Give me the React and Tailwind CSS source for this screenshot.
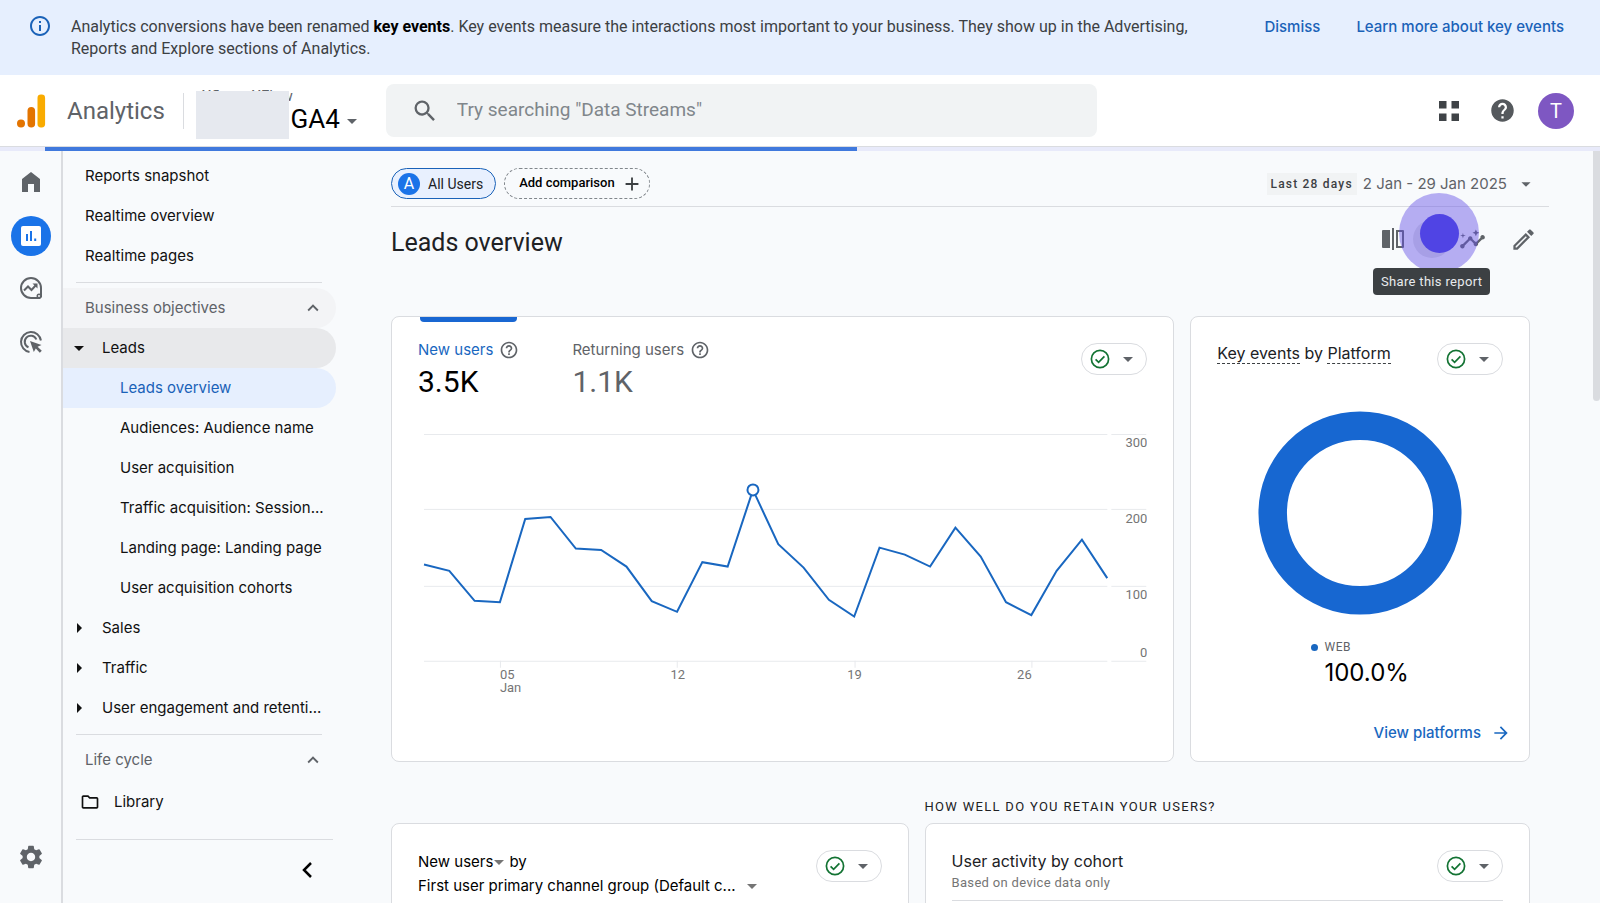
import { useState } from "react";
import {
  MdAdd,
  MdArrowDropDown,
  MdArrowForward,
  MdArrowRight,
  MdExpandLess,
  MdHelp,
  MdHelpOutline,
  MdInfoOutline,
  MdInsights,
  MdOutlineEdit,
  MdOutlineFolder,
  MdSearch,
  MdSettings,
} from "react-icons/md";

const reportLinks = ["Reports snapshot", "Realtime overview", "Realtime pages"];

const leadLinks = [
  "Leads overview",
  "Audiences: Audience name",
  "User acquisition",
  "Traffic acquisition: Session...",
  "Landing page: Landing page",
  "User acquisition cohorts",
];

const collapsedGroups = ["Sales", "Traffic", "User engagement and retenti..."];

// y position of every day in the chart, 2 Jan - 29 Jan
const points = [
  134.7, 141, 171, 172.3, 89, 87, 118.7, 120, 136.7, 171.3, 182, 132.3, 136.7,
  60, 114.3, 137.7, 170, 186.7, 117.7, 124.7, 136.7, 97.7, 126.7, 172.3, 185.3,
  141, 109.7, 148.3,
];
const STEP = 25.33;

const gridLines = [
  { y: 4, label: "300", labelY: 17 },
  { y: 79, label: "200", labelY: 93 },
  { y: 156, label: "100", labelY: 169 },
  { y: 231, label: "0", labelY: 227 },
];

function Banner() {
  return (
    <div className="flex shrink-0 items-start bg-[#e6effe] pt-3.5 pr-9 pb-[15px] pl-7 text-base leading-[22px]">
      <MdInfoOutline className="size-6 shrink-0 text-[#1a62b8]" />
      <p className="ml-[19px] min-w-0 flex-1 pt-0.5 text-[#3c4043]">
        Analytics conversions have been renamed <b className="text-black">key events</b>. Key events
        measure the interactions most important to your business. They show up in the Advertising,
        Reports and Explore sections of Analytics.
      </p>
      <div className="ml-14 flex shrink-0 gap-9 pt-0.5 font-[Inter,sans-serif] text-[15px] font-medium text-[#1a62b8]">
        <button>Dismiss</button>
        <a href="#key-events">Learn more about key events</a>
      </div>
    </div>
  );
}

function Logo() {
  return (
    <svg viewBox="0 0 30 34" className="h-[34px] w-[30px] shrink-0">
      <circle cx="4" cy="29.5" r="4" fill="#e37400" />
      <rect x="10.500" y="13" width="7.6" height="20.5" rx="3.8" fill="#e37400" />
      <rect x="20.500" y="0.5" width="7.6" height="33" rx="3.4" fill="#f9ab00" />
    </svg>
  );
}

function Header() {
  return (
    <header className="flex h-[71px] shrink-0 items-center bg-white pr-[26px] pl-[17px]">
      <Logo />
      <span className="ml-5 text-2xl text-[#5f6368]">Analytics</span>
      <span className="ml-[18px] h-9 w-px bg-[#dadce0]" />
      <button className="relative mt-2 ml-3 flex h-12 w-[168px] items-end justify-end text-[26px]">
        <span className="absolute -top-1.5 left-1.5 text-[15px] whitespace-nowrap text-[#5f6368]">
          Xflow › XFlow
        </span>
        <span className="absolute top-0 left-0 h-12 w-[93px] bg-[#e6e9ef]" />
        <span>GA4</span>
        <MdArrowDropDown className="mb-1.5 size-6 text-[#5f6368]" />
      </button>
      <label className="ml-[22px] flex h-[53px] max-w-[711px] flex-1 items-center rounded-lg bg-[#f1f3f4] pl-[25px]">
        <MdSearch className="size-7 text-[#5f6368]" />
        <input
          aria-label="Search"
          placeholder={'Try searching "Data Streams"'}
          className="ml-[18px] min-w-0 flex-1 bg-transparent text-[19px] outline-none placeholder:text-[#80868b]"
        />
      </label>
      <div className="ml-auto flex items-center gap-6">
        <button aria-label="Apps" className="p-1.5">
          <svg viewBox="0 0 20 20" className="size-5" fill="#3f4347">
            <path d="M0 0h7.5v7.5H0zM12.5 0H20v7.5h-7.5zM0 12.5h7.5V20H0zM12.5 12.5H20V20h-7.5z" />
          </svg>
        </button>
        <button aria-label="Help">
          <MdHelp className="size-[27px] text-[#55595d]" />
        </button>
        <button
          aria-label="Account"
          className="-ml-0.5 size-9 rounded-full bg-[#7e57c2] text-xl text-white"
        >
          T
        </button>
      </div>
    </header>
  );
}

function Rail() {
  return (
    <nav className="flex w-[63px] shrink-0 flex-col items-center border-r-2 border-[#dadce0] pt-[11px] pb-8 text-[#5f6368]">
      <a href="#home" aria-label="Home" className="flex size-10 items-center justify-center">
        <svg viewBox="0 0 24 24" className="size-6" fill="currentColor">
          <path d="M12 2 3 9v13h6v-8h6v8h6V9z" />
        </svg>
      </a>
      <a
        href="#reports"
        aria-label="Reports"
        className="mt-3.5 flex size-10 items-center justify-center rounded-full bg-[#1a73e8]"
      >
        <svg viewBox="0 0 24 24" className="size-6">
          <rect x="2" y="2" width="20" height="20" rx="2" fill="#fff" />
          <path d="M7 10h2v7H7zM11 7h2v10h-2zM15.2 14.5h2V17h-2z" fill="#1a73e8" />
        </svg>
      </a>
      <a href="#explore" aria-label="Explore" className="mt-3 flex size-10 items-center justify-center">
        <svg viewBox="0 0 24 24" className="size-6" fill="none" stroke="currentColor" strokeWidth="2">
          <path d="M21.5 22H12A10 10 0 1 1 22 12v9.500" />
          <path d="M5 14.500l4-4 3.500 3.500 5-5.500" />
          <path d="M13.500 7.500h5v5z" fill="currentColor" stroke="none" />
          <circle cx="20" cy="20" r="2.500" fill="currentColor" stroke="none" />
          <circle cx="20" cy="20" r="1" fill="#f8fafc" stroke="none" />
        </svg>
      </a>
      <a
        href="#advertising"
        aria-label="Advertising"
        className="mt-3.5 flex size-10 items-center justify-center"
      >
        <svg viewBox="0 0 24 24" className="size-6" fill="none" stroke="currentColor" strokeWidth="2">
          <path d="M10.500 21.900A10 10 0 1 1 21.900 10.500" />
          <path d="M9.500 17.300A6 6 0 1 1 17.300 9.500" />
          <path
            d="M11 11l3.800 11 2-3.500 4 4.200 2-2-4.200-4L22.500 15z"
            fill="currentColor"
            stroke="none"
          />
        </svg>
      </a>
      <a href="#admin" aria-label="Admin" className="mt-auto">
        <MdSettings className="size-7" />
      </a>
    </nav>
  );
}

function SideBar() {
  return (
    <nav className="w-[273px] shrink-0 pt-[5px] font-[Inter,sans-serif] text-[15px] text-[#111]">
      {reportLinks.map((item) => (
        <a key={item} href="#report" className="flex h-10 items-center pl-[22px]">
          {item}
        </a>
      ))}
      <hr className="mt-1.5 mr-3.5 mb-[5px] ml-[13px] border-[#dadce0]" />
      <button className="flex h-10 w-full items-center justify-between rounded-r-full bg-[#f3f4f6] pr-3 pl-[22px] text-[#5f6368]">
        Business objectives
        <MdExpandLess className="size-[22px]" />
      </button>
      <button className="flex h-10 w-full items-center rounded-r-full bg-[#e8e9eb] pl-1">
        <MdArrowDropDown className="size-6" />
        <span className="ml-[11px]">Leads</span>
      </button>
      {leadLinks.map((item, i) => (
        <a
          key={item}
          href="#lead"
          className={
            i === 0
              ? "flex h-10 items-center rounded-r-full bg-[#e6effe] pl-[57px] text-[#1a62b8]"
              : "flex h-10 items-center pl-[57px]"
          }
        >
          {item}
        </a>
      ))}
      {collapsedGroups.map((item) => (
        <button key={item} className="flex h-10 w-full items-center pl-1">
          <MdArrowRight className="size-6 shrink-0" />
          <span className="ml-[11px]">{item}</span>
        </button>
      ))}
      <hr className="mt-1.5 mr-3.5 mb-[5px] ml-[13px] border-[#dadce0]" />
      <button className="flex h-10 w-full items-center justify-between pr-3 pl-[22px] text-[#5f6368]">
        Life cycle
        <MdExpandLess className="size-[22px]" />
      </button>
      <a href="#library" className="mt-0.5 flex h-10 items-center pl-[17px]">
        <MdOutlineFolder className="size-5" />
        <span className="ml-3.5">Library</span>
      </a>
      <hr className="mt-[17px] mr-[3px] ml-[13px] border-[#dadce0]" />
      <div className="flex justify-end pt-5 pr-[18px]">
        <button aria-label="Collapse navigation" className="p-0.5">
          <svg viewBox="0 0 16 16" className="size-4" fill="none" stroke="#000" strokeWidth="2.500">
            <path d="M11 1 4 8l7 7" />
          </svg>
        </button>
      </div>
    </nav>
  );
}

function StatusPill() {
  return (
    <button
      aria-label="Data quality"
      className="flex h-8 w-[66px] shrink-0 items-center justify-between rounded-full border border-[#dadce0] pr-1.5 pl-2"
    >
      <svg viewBox="0 0 20 20" className="size-5" fill="none" stroke="#137333" strokeWidth="1.700">
        <circle cx="10" cy="10" r="8.600" />
        <path d="m5.600 10.300 3 3 5.800-6" />
      </svg>
      <MdArrowDropDown className="size-6 text-[#5f6368]" />
    </button>
  );
}

function Toolbar() {
  return (
    <div className="flex h-14 items-center border-b border-[#dadce0] pt-3.5 pb-1 text-sm">
      <button className="flex h-[31px] items-center rounded-full border border-[#1a62b8] bg-[#e8f0fe] pr-3 pl-1.5 text-[#202124]">
        <span className="mr-2 flex size-[22px] items-center justify-center rounded-full bg-[#1a73e8] text-base text-white">
          A
        </span>
        All Users
      </button>
      <button className="ml-2 flex h-[31px] items-center rounded-full border border-dashed border-[#80868b] pr-1.5 pl-3.5 text-[13px] font-medium">
        Add comparison
        <MdAdd className="ml-1.5 size-[22px] text-[#3c4043]" />
      </button>
      <button className="ml-auto flex items-center pr-3 font-[Inter,sans-serif] text-[15px] text-[#5f6368]">
        <span className="mr-1.5 bg-[#f1f3f4] px-1 font-[Roboto,sans-serif] text-xs leading-[22px] font-medium tracking-widest text-[#3c4043]">
          Last 28 days
        </span>
        2 Jan - 29 Jan 2025
        <MdArrowDropDown className="ml-2 size-[22px]" />
      </button>
    </div>
  );
}

function ReportActions() {
  return (
    <div className="relative flex items-center gap-3 pb-0.5 text-[#5f6368]">
      <button aria-label="Edit comparisons" className="p-1.5">
        <svg viewBox="0 0 24 24" className="size-6" fill="currentColor">
          <path d="M2 3h7v18H2a1 1 0 0 1-1-1V4a1 1 0 0 1 1-1zM11 1h2v22h-2z" />
          <path d="M15 3h7a1 1 0 0 1 1 1v16a1 1 0 0 1-1 1h-7zm2 2v14h4V5z" fillRule="evenodd" />
        </svg>
      </button>
      <button
        aria-label="Share this report"
        className="-mr-1 -ml-2.5 size-[38px] rounded-full bg-[#dfe1e5]"
      />
      <button aria-label="Insights">
        <MdInsights className="size-[27px]" />
      </button>
      <button aria-label="Customise report" className="ml-3">
        <MdOutlineEdit className="size-[27px]" />
      </button>
      <div className="pointer-events-none absolute -top-[27px] left-6 flex size-20 items-center justify-center rounded-full bg-[#6450e6]/45">
        <div className="size-[39px] rounded-full bg-[#5044e4]" />
      </div>
      <div
        role="tooltip"
        className="absolute top-12 -left-0.5 rounded bg-[#3c4043] px-2 text-[13px] leading-[27px] tracking-wide whitespace-nowrap text-[#e8eaed]"
      >
        Share this report
      </div>
    </div>
  );
}

function LineChart() {
  const line = points.map((y, i) => `${6 + i * STEP},${y}`).join(" ");
  return (
    <svg viewBox="0 0 730 270" className="mt-8 w-full" fontSize="13" fill="#757575">
      {gridLines.map((g) => (
        <g key={g.label}>
          <path d={`M6 ${g.y + 0.5}H690M694 ${g.y + 0.5}H729`} stroke="#e8eaed" />
          <text x="730" y={g.labelY} textAnchor="end">
            {g.label}
          </text>
        </g>
      ))}
      <path d="M82.500 231v7M259.500 231v7M437.500 231v7M614.500 231v7" stroke="#e8eaed" />
      <text x="82" y="249">05</text>
      <text x="82" y="262">Jan</text>
      <text x="260" y="249" textAnchor="middle">12</text>
      <text x="437" y="249" textAnchor="middle">19</text>
      <text x="607" y="249" textAnchor="middle">26</text>
      <polyline points={line} fill="none" stroke="#1967c0" strokeWidth="2" />
      <circle cx={6 + 13 * STEP} cy="60" r="5.500" fill="#fff" stroke="#1967c0" strokeWidth="2" />
    </svg>
  );
}

function UsersCard() {
  const [tab, setTab] = useState(0);
  const tabs = [
    { label: "New users", value: "3.5K" },
    { label: "Returning users", value: "1.1K" },
  ];

  return (
    <section className="rounded-lg border border-[#dadce0] bg-white px-[26px] pb-[61px]">
      <div className="flex items-start">
        {tabs.map((t, i) => (
          <button key={t.label} onClick={() => setTab(i)} className="mr-[53px] text-left">
            <span
              className={
                tab === i ? "mx-0.5 block h-[5px] rounded-b bg-[#1967d2]" : "block h-[5px]"
              }
            />
            <span
              className={
                tab === i
                  ? "mt-4 flex items-center font-[Inter,sans-serif] text-[15px] leading-6 text-[#1967c0]"
                  : "mt-4 flex items-center font-[Inter,sans-serif] text-[15px] leading-6 text-[#5f6368]"
              }
            >
              {t.label}
              <MdHelpOutline className="ml-1.5 size-5 text-[#5f6368]" />
            </span>
            <span
              className={
                tab === i
                  ? "block pt-0.5 text-3xl leading-9"
                  : "block pt-0.5 text-3xl leading-9 text-[#5f6368]"
              }
            >
              {t.value}
            </span>
          </button>
        ))}
        <div className="mt-[26px] ml-auto">
          <StatusPill />
        </div>
      </div>
      <div className="-mt-0.5">
        <LineChart />
      </div>
    </section>
  );
}

function PlatformCard() {
  return (
    <section className="flex flex-col rounded-lg border border-[#dadce0] bg-white px-[26px] pt-[26px] pb-4">
      <div className="flex items-start justify-between">
        <h2 className="font-[Inter,sans-serif] text-base leading-5 text-[#202124]">
          <span className="border-b border-dashed border-[#3c4043]">Key events</span> by{" "}
          <span className="border-b border-dashed border-[#3c4043]">Platform</span>
        </h2>
        <StatusPill />
      </div>
      <svg viewBox="0 0 204 204" className="mx-auto mt-9 size-[204px]">
        <circle cx="102" cy="102" r="87.300" fill="none" stroke="#1767d1" strokeWidth="28.500" />
      </svg>
      <div className="mx-auto mt-6">
        <div className="flex items-center text-xs leading-4 tracking-wider text-[#5f6368]">
          <span className="mr-1.5 size-[7px] rounded-full bg-[#1967c0]" />
          WEB
        </div>
        <div className="ml-[13px] pt-0.5 font-[Inter,sans-serif] text-2xl">100.0%</div>
      </div>
      <a
        href="#platforms"
        className="mt-auto -mr-2 flex items-center justify-end font-[Inter,sans-serif] text-[15px] leading-6 font-medium text-[#1967c0]"
      >
        View platforms
        <MdArrowForward className="ml-2.5 size-5" />
      </a>
    </section>
  );
}

function ChannelCard() {
  return (
    <section className="flex h-[420px] items-start justify-between rounded-lg border border-[#dadce0] bg-white p-[26px] font-[Inter,sans-serif] text-[15px] leading-[22px]">
      <div className="min-w-0">
        <div className="flex items-center">
          <button className="flex items-center">
            New users
            <MdArrowDropDown className="-mx-1.5 size-6 text-[#757575]" />
          </button>
          <span className="ml-1">by</span>
        </div>
        <button className="flex items-center">
          First user primary channel group (Default c...
          <MdArrowDropDown className="ml-1 size-6 text-[#757575]" />
        </button>
      </div>
      <StatusPill />
    </section>
  );
}

function CohortCard() {
  return (
    <section className="h-[420px] rounded-lg border border-[#dadce0] bg-white p-[26px]">
      <div className="flex items-start justify-between border-b border-[#dadce0] pb-1.5">
        <div className="leading-[22px]">
          <h2 className="font-[Inter,sans-serif] text-base leading-[22px] text-[#202124]">
            User activity by cohort
          </h2>
          <p className="text-[13px] tracking-wide text-[#757575]">Based on device data only</p>
        </div>
        <StatusPill />
      </div>
    </section>
  );
}

export default function App() {
  return (
    <div className="flex h-screen flex-col overflow-hidden bg-[#f8fafc] font-[Roboto,sans-serif] text-black">
      <Banner />
      <Header />
      <div className="h-[5px] shrink-0 border-t border-[#dadce0] bg-[#e8eafa] pl-[45px]">
        <div className="h-1 w-[52.200%] bg-[#4079dd]" />
      </div>
      <div className="flex min-h-0 flex-1">
        <Rail />
        <SideBar />
        <main className="min-w-0 flex-1 overflow-hidden pr-11 pl-[55px]">
          <Toolbar />
          <div className="flex h-[66px] items-center justify-between pr-3">
            <h1 className="pt-1.5 text-[25px] text-[#202124]">Leads overview</h1>
            <ReportActions />
          </div>
          <div className="mt-[43px] grid grid-cols-[784fr_340fr] gap-4 pr-[19px]">
            <UsersCard />
            <PlatformCard />
          </div>
          <div className="mt-9 grid grid-cols-[518fr_606fr] gap-x-4 pr-[19px]">
            <h2 className="col-start-2 mb-[7px] text-[13px] leading-[18px] tracking-widest text-[#202124]">
              HOW WELL DO YOU RETAIN YOUR USERS?
            </h2>
            <ChannelCard />
            <CohortCard />
          </div>
        </main>
        <div className="w-[7px] shrink-0">
          <div className="h-[250px] rounded-b bg-[#dadce0]" />
        </div>
      </div>
    </div>
  );
}
